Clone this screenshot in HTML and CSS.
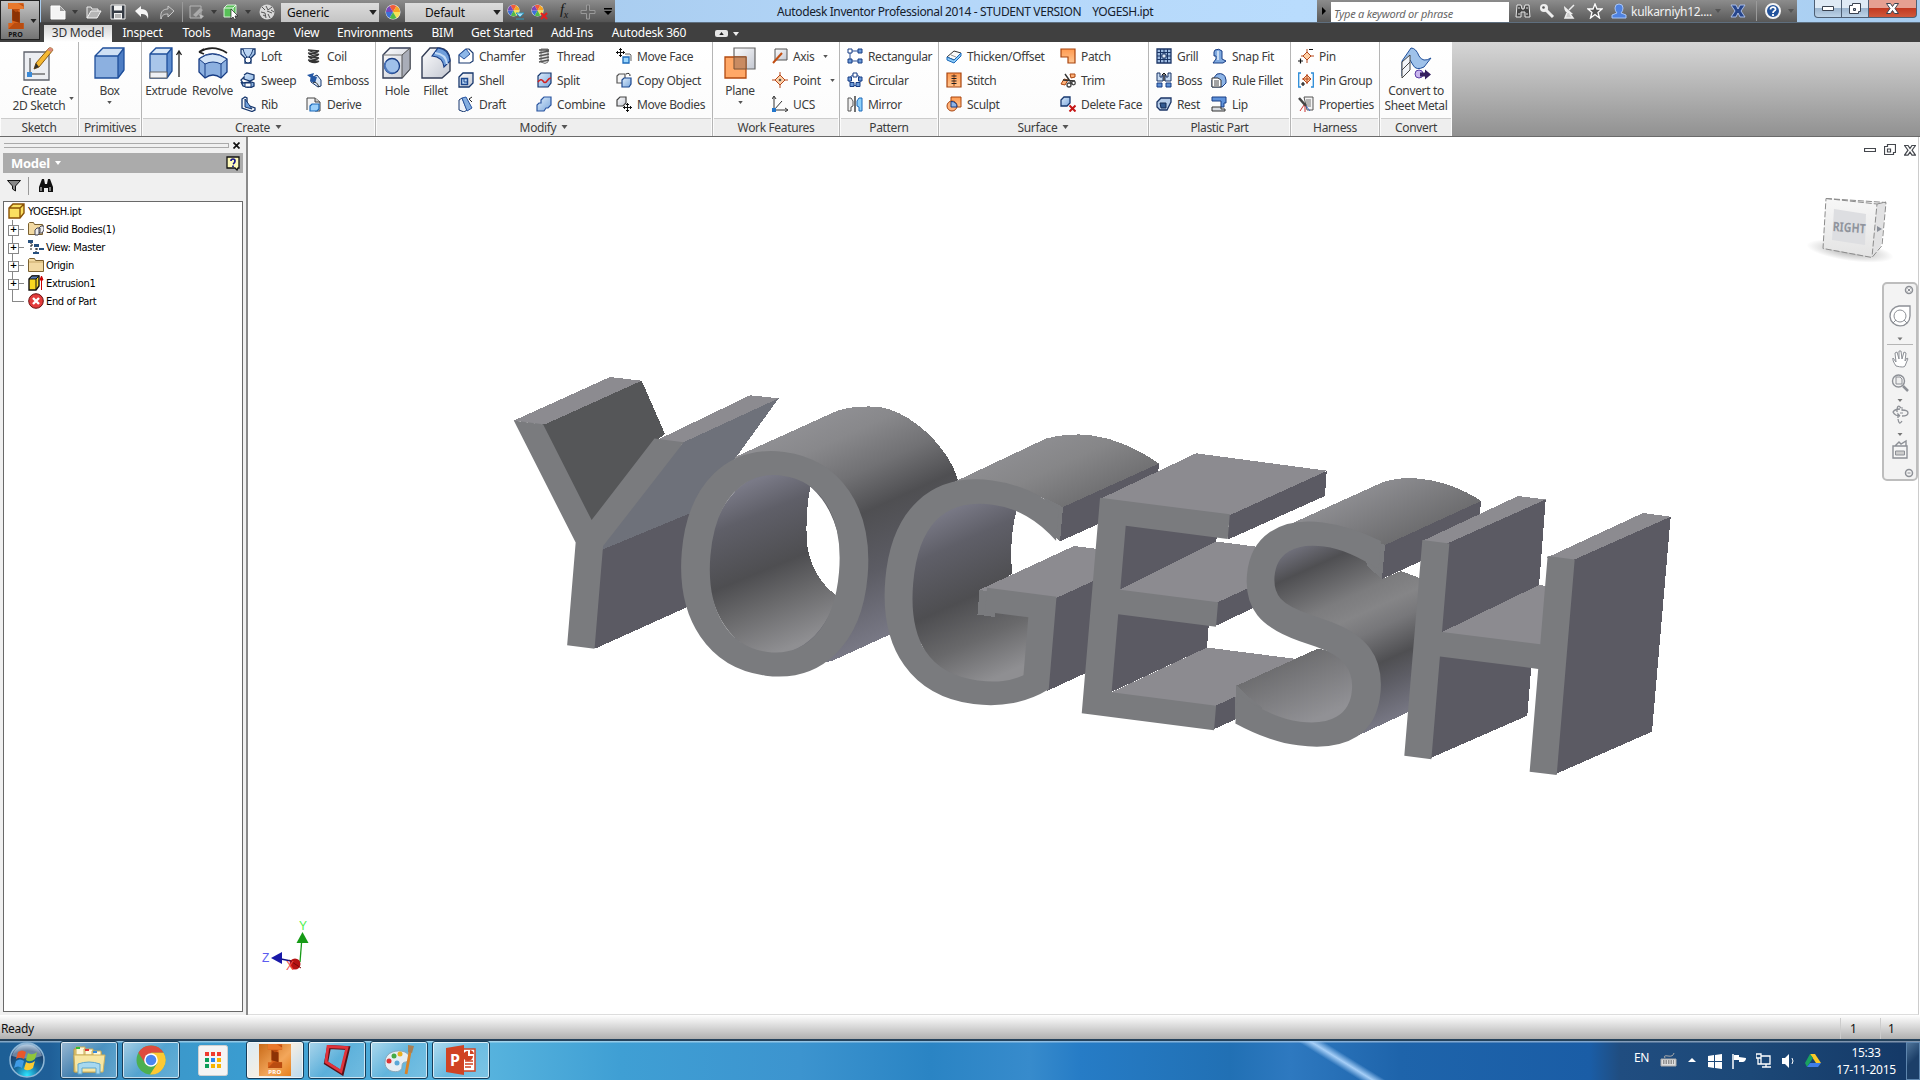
FILE: index.html
```html
<!DOCTYPE html>
<html lang="en">
<head>
<meta charset="utf-8">
<title>Autodesk Inventor Professional 2014</title>
<link rel="stylesheet" href="styles.css">
</head>
<body>
<svg class="defs" width="0" height="0" aria-hidden="true">
  <defs>
    <linearGradient id="blu" x1="0" y1="0" x2="1" y2="1"><stop offset="0" stop-color="#dcecfb"/><stop offset="1" stop-color="#7ba7dc"/></linearGradient>
    <linearGradient id="gry" x1="0" y1="0" x2="1" y2="1"><stop offset="0" stop-color="#fdfdfe"/><stop offset="1" stop-color="#c3c7d1"/></linearGradient>
    <linearGradient id="org" x1="0" y1="0" x2="0" y2="1"><stop offset="0" stop-color="#ff9a50"/><stop offset="1" stop-color="#ffc692"/></linearGradient>
  </defs>
  <symbol id="arrow" viewBox="0 0 6 4"><path d="M0 0h6L3 4z" fill="currentColor"/></symbol>
  <symbol id="inventor" viewBox="0 0 20 34"><path d="M0 0h20v8h-5v18h5v8H0v-8h5V8H0z" fill="#d9621a"/><path d="M5 8l10 4v14l-10-3z" fill="#8c3205"/><path d="M0 0l20 2v6h-5l-5 4-5-4H0zM0 34l8-8h12v8z" fill="#b94c10"/><path d="M0 0h12l8 5v3H0z" fill="#e8782c"/></symbol>

  <symbol id="q-new" viewBox="0 0 16 16"><path d="M1 2h9l5 5v8H1z" fill="#f4f4f4" stroke="#fff"/><path d="M10 2v5h5z" fill="#999"/></symbol>
  <symbol id="q-open" viewBox="0 0 16 16"><path d="M1 14V3h4l1 2h6v3" fill="#888" stroke="#eee"/><path d="M1 14l4-7h10l-4 7z" fill="#b5b5b5" stroke="#f4f4f4"/></symbol>
  <symbol id="q-save" viewBox="0 0 16 16"><path d="M1 1h14v14H1z" fill="#353b44" stroke="#eee"/><path d="M4 1.500h8v5H4zM4 9h8v6H4z" fill="#f3f3f3"/><path d="M5 11h6M5 13h6" stroke="#777"/></symbol>
  <symbol id="q-undo" viewBox="0 0 16 16"><path d="M1 7l6-5v3c6 0 8 4 7 10-1-4-3-5-7-5v3z" fill="#f6f6f6"/></symbol>
  <symbol id="q-redo" viewBox="0 0 16 16"><path d="M15 7L9 2v3C3 5 1 9 2 15c1-4 3-5 7-5v3z" fill="#777" stroke="#c8c8c8"/></symbol>
  <symbol id="q-sketch" viewBox="0 0 16 16"><path d="M1 2h11v12H1z" fill="#777" stroke="#b5b5b5"/><path d="M4 11l7-7 3 2-7 7z" fill="#aaa"/><path d="M10 10l5 2-3 3z" fill="#bbb"/></symbol>
  <symbol id="q-select" viewBox="0 0 16 16"><path d="M1 4l3-3h9v9l-3 3H1z" fill="#58c058" stroke="#d8f0d8"/><path d="M1 4h9v9M10 4l3-3" fill="none" stroke="#e8f8e8"/><path d="M8 5v10l2-2 2 3 1-1-1-3h3z" fill="#fff" stroke="#222" stroke-width=".7"/></symbol>
  <symbol id="q-ball" viewBox="0 0 16 16"><circle cx="8" cy="8" r="7.500" fill="#d8d8d8"/><path d="M3 3l3 3M7 2l2 4 4-3M2 8l4 1 1 5M8 7l5 2M9 10l2 4M12 6l3 2M4 11l2 1" stroke="#555" fill="none"/></symbol>
  <symbol id="q-wheel" viewBox="0 0 16 16"><circle cx="8" cy="8" r="7.500" fill="#eee"/><path d="M8 8L4.500 1.900A7 7 0 0 1 11.500 1.900z" fill="#ef5c3c"/><path d="M8 8l3.500-6.100A7 7 0 0 1 15 8z" fill="#f5a623"/><path d="M8 8h7a7 7 0 0 1-3.500 6.100z" fill="#f6e356"/><path d="M8 8l3.500 6.100a7 7 0 0 1-7 0z" fill="#52b947"/><path d="M8 8l-3.500 6.100A7 7 0 0 1 1 8z" fill="#3c6fd8"/><path d="M8 8H1a7 7 0 0 1 3.500-6.100z" fill="#7a46b8"/></symbol>
  <symbol id="q-wheel-pen" viewBox="0 0 18 16"><use href="#q-wheel" width="13" height="13"/><path d="M9 9h8l-4 4zM9 15h8" fill="#a9dcf8" stroke="#39b"/></symbol>
  <symbol id="q-wheel-x" viewBox="0 0 18 16"><use href="#q-wheel" width="13" height="13"/><path d="M10 9l6 6M16 9l-6 6" stroke="#e02020" stroke-width="2.200"/></symbol>
  <symbol id="q-plus" viewBox="0 0 16 16"><path d="M6.500 1h3v5.500H15v3H9.500V15h-3V9.500H1v-3h5.500z" fill="#666" stroke="#999"/></symbol>
  <symbol id="t-bino" viewBox="0 0 16 16"><path d="M2 2h4l1 4h2l1-4h4l1 12h-5V9H6v5H1z" fill="#444" stroke="#e8e8e8"/><path d="M3 5h2M11 5h2M3 11h2M11 11h2" stroke="#ddd"/></symbol>
  <symbol id="t-key" viewBox="0 0 16 16"><circle cx="5" cy="5" r="4" fill="#eee"/><circle cx="4.500" cy="4.500" r="1.300" fill="#555"/><path d="M7 7l7 7" stroke="#eee" stroke-width="3"/></symbol>
  <symbol id="t-dish" viewBox="0 0 16 16"><path d="M2 3c0 6 4 9 9 8z" fill="#eee"/><path d="M7 7l5-5M5 10l-2 5h8l-3-4" stroke="#eee" stroke-width="1.500" fill="#ccc"/></symbol>
  <symbol id="t-star" viewBox="0 0 16 16"><path d="M8 1l2 5h5l-4 3.500L12.500 15 8 11.500 3.500 15 5 9.500 1 6h5z" fill="#555" stroke="#fff" stroke-width="1.300"/></symbol>
  <symbol id="t-user" viewBox="0 0 16 16"><path d="M8 1q4 0 4 4 0 3-2 5l5 2v3H1v-3l5-2Q4 8 4 5q0-4 4-4z" fill="#4f82e0" stroke="#a8c6f8"/></symbol>
  <symbol id="t-x" viewBox="0 0 16 16"><path d="M1 2h5l2 4 2-4h5l-4 6 4 6h-5l-2-4-2 4H1l4-6z" fill="#27468c" stroke="#a9bce6"/></symbol>
  <symbol id="t-help" viewBox="0 0 16 16"><circle cx="8" cy="8" r="7" fill="#23539c" stroke="#f5f5f5" stroke-width="2"/><path d="M5.500 6.500C5.500 3 11 3.500 10.500 6.500 10 8 8 8 8 10M8 11v2" stroke="#fff" stroke-width="1.800" fill="none"/></symbol>

  <symbol id="i-loft" viewBox="0 0 16 16"><path d="M1 1h14v5l-4 4v5H5v-5L1 6z" fill="url(#blu)" stroke="#16376e" stroke-width="1.300"/><path d="M3 1c1 4 2 6 5 9 3-3 4-5 5-9" fill="#b9d4f3" stroke="#16376e"/><circle cx="8" cy="12" r="3" fill="#fff" stroke="#16376e"/></symbol>
  <symbol id="i-sweep" viewBox="0 0 16 16"><path d="M4 3l3-2 7 2v4l-4 2-6-2v-2L1 8l2 3 8-1 3 1v3l-4 2-7-2-2-4" fill="url(#blu)" stroke="#16376e" stroke-width="1.300"/><path d="M5 11h6v4H5z" fill="#fff" stroke="#16376e"/></symbol>
  <symbol id="i-rib" viewBox="0 0 16 16"><path d="M2 3l3-2 2 1v7l8 3v2l-3 1.500L2 12z" fill="#f4f6fa" stroke="#16376e" stroke-width="1.300"/><path d="M5 3v8l7 2z" fill="#6fa0dc" stroke="#16376e"/></symbol>
  <symbol id="i-coil" viewBox="0 0 16 16"><path d="M2 2l11 1M2 5l11 1.500M2 8.500L13 10M2 12l11 1.500M3 2.500q7 4 10 0M3 6q7 4 10 0M3 9.500q7 4 10 0M3 13q7 3 10 0" stroke="#333" stroke-width="1.400" fill="none"/></symbol>
  <symbol id="i-emboss" viewBox="0 0 16 16"><path d="M5 6l6-3 4 5v6l-3 1-7-5z" fill="#d8e6f6" stroke="#16376e"/><path d="M1 3l7-2-1 3 4 1-2 6-5-2 1-3z" fill="#2458a5"/><path d="M7 11q3-3 6 4" stroke="#333" fill="none"/></symbol>
  <symbol id="i-derive" viewBox="0 0 16 16"><path d="M1 14V2h8l5 4v9H9" fill="#f4f4f4" stroke="#444"/><path d="M9 2v4h5" fill="#ccc" stroke="#444"/><path d="M4 10l2-2h7v5l-2 2H4z" fill="#9bd0fa" stroke="#1b69b9" stroke-width="1.200"/></symbol>
  <symbol id="i-chamfer" viewBox="0 0 16 16"><path d="M1 7l7-6h3l4 4v8l-3 2H1z" fill="#fff" stroke="#16376e" stroke-width="1.200"/><path d="M1 7l7-6 4 5-6 5z" fill="#8db7e8" stroke="#2a55a0"/></symbol>
  <symbol id="i-shell" viewBox="0 0 16 16"><path d="M1 5l4-4h10v10l-4 4H1z" fill="url(#gry)" stroke="#16376e" stroke-width="1.300"/><path d="M3.500 6.500h6v6h-6z" fill="#bcd8f6" stroke="#1b478e" stroke-width="1.500"/><path d="M6 6.500v3.500h4" stroke="#1b478e" fill="none"/></symbol>
  <symbol id="i-draft" viewBox="0 0 16 16"><path d="M1 14V4l3-2 5 12-3 2z" fill="#eef3f9" stroke="#16376e"/><path d="M4 2l4-1 6 11-5 3z" fill="#83aee0" stroke="#2a55a0"/><path d="M14 1l-3 2 3 3" stroke="#222" fill="none"/></symbol>
  <symbol id="i-thread" viewBox="0 0 16 16"><path d="M5 1h7v13l-3 1.500L5 14z" fill="#e5e5e5" stroke="#777"/><path d="M3 5l10-2M3 8l10-2M3 11l10-2M3 14l10-2M3 2h10" stroke="#555" stroke-width="1.300"/></symbol>
  <symbol id="i-split" viewBox="0 0 16 16"><path d="M2 4l3-3h10v10l-3 4H2z" fill="url(#blu)" stroke="#16376e" stroke-width="1.200"/><path d="M2 10q3-4 5-1t4 0 4-3" stroke="#d21f1f" stroke-width="1.500" fill="none"/></symbol>
  <symbol id="i-combine" viewBox="0 0 16 16"><path d="M5 4l3-3h7v8l-3 3h-2l-2 3H1V9l2-2h2z" fill="url(#blu)" stroke="#2a55a0" stroke-width="1.200"/></symbol>
  <symbol id="i-moveface" viewBox="0 0 16 16"><path d="M4.500 0v9M0 4.500h9M3 1.500h3M3 7.500h3M1.500 3v3M7.500 3v3" stroke="#111"/><path d="M9 6h5l1 1v6" fill="#eee" stroke="#666"/><path d="M7 9h6v6H7z" fill="#9bd6fc" stroke="#1b69b9" stroke-width="1.300"/></symbol>
  <symbol id="i-copyobj" viewBox="0 0 16 16"><path d="M1 4l2-2h6v7l-2 2H1z" fill="#f5f5f5" stroke="#555" stroke-width="1.200"/><path d="M6 8l2-2h7v6l-2 3H6z" fill="url(#blu)" stroke="#1b478e" stroke-width="1.200"/><path d="M10 2q4-2 4 2" stroke="#222" fill="none"/></symbol>
  <symbol id="i-movebody" viewBox="0 0 16 16"><path d="M1 4l3-3h6v6l-3 3H1z" fill="url(#gry)" stroke="#444" stroke-width="1.200"/><path d="M11.500 7v9M7 11.500h9M10 8.500h3M10 14.500h3M8.500 10v3M14.500 10v3" stroke="#111"/></symbol>
  <symbol id="i-axis" viewBox="0 0 16 16"><path d="M3 1h12v11H3z" fill="url(#gry)" stroke="#555"/><path d="M1 15L10 5" stroke="#c24e12" stroke-width="2"/></symbol>
  <symbol id="i-point" viewBox="0 0 16 16"><path d="M8 0v16M0 8h16" stroke="#b6471a"/><path d="M8 3l5 5-5 5-5-5z" fill="#ffd0a5" stroke="#b6471a"/><circle cx="8" cy="8" r="1.300" fill="#555"/></symbol>
  <symbol id="i-ucs" viewBox="0 0 16 16"><path d="M2 1v13h13M2 14l8-9" stroke="#333" fill="none"/><path d="M0 3l2-3 2 3M13 12l3 2-3 2" fill="none" stroke="#333"/><path d="M0 12h4v4H0z" fill="#2276cc"/></symbol>
  <symbol id="i-rect" viewBox="0 0 16 16"><path d="M3 3h10M3 3v10h10" stroke="#2a4f96" fill="none"/><path d="M1 1h4v4H1z" fill="#fff" stroke="#173c84"/><path d="M11 1h4v4h-4zM11 11h4v4h-4zM1 11h4v4H1z" fill="#6d9bd8" stroke="#173c84"/></symbol>
  <symbol id="i-circ" viewBox="0 0 16 16"><circle cx="8" cy="8" r="5.500" fill="none" stroke="#2a4f96"/><path d="M6 1h4v4H6z" fill="#fff" stroke="#173c84"/><path d="M1 5h3.500v4H1zM11.500 5H15v4h-3.500zM3 10.500h4v4H3zM9 10.500h4v4H9z" fill="#6d9bd8" stroke="#173c84"/></symbol>
  <symbol id="i-mirror" viewBox="0 0 16 16"><path d="M8 0v16" stroke="#111" stroke-width="1.200"/><path d="M1 2h3l2 3v5l-2 1v4H1z" fill="#eee" stroke="#555"/><path d="M15 2h-3l-2 3v5l2 1v4h3z" fill="#8ed0fa" stroke="#1b69b9"/></symbol>
  <symbol id="i-thicken" viewBox="0 0 16 16"><path d="M1 9l7-6 7 2-7 7z" fill="#fafafa" stroke="#333"/><path d="M1 9v3l7 3 7-7V5l-7 7z" fill="#8ccaf8" stroke="#1b69b9"/><path d="M5 7l5 2" stroke="#999"/></symbol>
  <symbol id="i-stitch" viewBox="0 0 16 16"><path d="M1 1h14v14H1z" fill="url(#org)" stroke="#a8440e" stroke-width="1.200"/><path d="M8 2v12" stroke="#a8440e"/><path d="M5.500 4h5M5.500 6.500h5M5.500 9h5M5.500 11.500h5" stroke="#222" stroke-width="1.200"/></symbol>
  <symbol id="i-sculpt" viewBox="0 0 16 16"><path d="M5 1h10v10H5z" fill="url(#org)" stroke="#a8440e"/><circle cx="6" cy="10" r="5" fill="#ffb27a" stroke="#a8440e"/><path d="M5 5.500q6 0 6 5.500H5z" fill="#8fb4e6" stroke="#173c84"/></symbol>
  <symbol id="i-patch" viewBox="0 0 16 16"><path d="M1 1h14v14H8V9H1z" fill="url(#org)" stroke="#a8440e" stroke-width="1.200"/></symbol>
  <symbol id="i-trim" viewBox="0 0 16 16"><path d="M1 12l3-5 4 1-3 5zM10 2h5v3l-4 1z" fill="#ffb27a" stroke="#a8440e"/><path d="M5 2l7 10M3 8l12 1" stroke="#333" stroke-width="1.400"/><circle cx="9" cy="13" r="2" fill="none" stroke="#444" stroke-width="1.300"/><circle cx="13.500" cy="11" r="1.800" fill="none" stroke="#444" stroke-width="1.300"/></symbol>
  <symbol id="i-delface" viewBox="0 0 16 16"><path d="M1 4l3-3h6v6l-3 3H1z" fill="url(#blu)" stroke="#16376e" stroke-width="1.300"/><path d="M9.500 9.500l6 6M15.500 9.500l-6 6" stroke="#c51616" stroke-width="2"/></symbol>
  <symbol id="i-grill" viewBox="0 0 16 16"><path d="M1 1h14v14H1z" fill="#9cb9df" stroke="#1b3566" stroke-width="1.300"/><path d="M4.500 1v14M8 1v14M11.500 1v14M1 4.500h14M1 8h14M1 11.500h14" stroke="#1b3566"/><path d="M6 6h4v4H6z" fill="#dfe9f6" stroke="#1b3566"/></symbol>
  <symbol id="i-boss" viewBox="0 0 16 16"><path d="M1 1h3v4h2V3h1v6H1zM15 1h-3v4h-2V3H9v6h6z" fill="#c8dbf1" stroke="#1b3566"/><path d="M8 9V1M6 3l2-2 2 2" stroke="#111" fill="none"/><path d="M1 11h5v4H1zM10 11h5v4h-5z" fill="#5d8ed2" stroke="#173c84"/></symbol>
  <symbol id="i-rest" viewBox="0 0 16 16"><path d="M1 6l4-4h10v4l-4 8H4L1 11z" fill="#b4cbe8" stroke="#1b3566" stroke-width="1.300"/><path d="M4 7h6v5H5z" fill="#31588f" stroke="#122a55"/></symbol>
  <symbol id="i-snap" viewBox="0 0 16 16"><path d="M4 2q4-2 7 1v8l4 2-3 2H2l3-4V8H3V4z" fill="#7fa9df" stroke="#173c84"/><path d="M7 3v9" stroke="#e5effa" stroke-width="1.500"/></symbol>
  <symbol id="i-rulefillet" viewBox="0 0 16 16"><path d="M1 8l5-6q8-2 9 6v3l-4 4H1z" fill="#8db4e6" stroke="#173c84"/><path d="M1 6h6l3 2v7H1z" fill="#fff" stroke="#333"/><path d="M3 9h5M3 11h5M3 13h5" stroke="#444"/></symbol>
  <symbol id="i-lip" viewBox="0 0 16 16"><path d="M1 1h14v6h-2v4h-3V5H1z" fill="#5f92da" stroke="#173c84"/><path d="M1 11h9v2h4v2H1z" fill="#d8dce2" stroke="#333"/></symbol>
  <symbol id="i-pin" viewBox="0 0 16 16"><path d="M9 1v14M3 8h13" stroke="#b6471a"/><path d="M9 4l4 4-4 4-4-4z" fill="#ffd0a5" stroke="#b6471a"/><path d="M11 1.500h4M0 13h5M2.500 10.500v5" stroke="#111" stroke-width="1.200"/></symbol>
  <symbol id="i-pingroup" viewBox="0 0 16 16"><path d="M3 1H.7v14H3M13 1h2.300v14H13" stroke="#2a8bd8" fill="none" stroke-width="1.300"/><path d="M9 3l4 4-4 4-4-4z" fill="#ffd0a5" stroke="#b6471a"/><path d="M9 2v10M4 7h9" stroke="#b6471a"/><path d="M3 12h4M5 10v4" stroke="#111" stroke-width="1.200"/></symbol>
  <symbol id="i-props" viewBox="0 0 16 16"><path d="M6 1h9v13H9z" fill="#f4f4f4" stroke="#555"/><path d="M8 4h5M8 6h5M8 8h5M9 10h4" stroke="#777"/><path d="M1 2l7 8" stroke="#444" stroke-width="2.500"/><path d="M6 9l-4 6M7 10v6" stroke="#c33"/><path d="M8 10l4 5" stroke="#36c"/></symbol>

  <symbol id="b-sketch" viewBox="0 0 36 38"><path d="M3 7h25v28H3z" fill="#eceef2" stroke="#5e626b" stroke-width="1.300"/><path d="M9 13v16h15" stroke="#333" fill="none"/><path d="M6 27h5v5H6z" fill="#3a8ad8"/><path d="M13 24l2-6L28 3q3-1 4 2L18 22z" fill="#f5b832" stroke="#8a5a10"/><path d="M28 3q3-1 4 2l-2 2-4-2z" fill="#d98a7a"/><path d="M13 24l2-6 3 4z" fill="#333"/></symbol>
  <symbol id="b-box" viewBox="0 0 36 38"><path d="M3 11l9-8h20l-6 8z" fill="#cfe0f4"/><path d="M3 11h23v22H3z" fill="#8cb0e0"/><path d="M26 11l6-8v23l-6 7z" fill="#4d7dc4"/><path d="M3 11l8-8h21v22l-6 8H3zM3 11h23v22M26 11l6-8" fill="none" stroke="#1f4f9a" stroke-width="1.300"/></symbol>
  <symbol id="b-extrude" viewBox="0 0 36 38"><path d="M2 9l6-6h16l-5 6v24H2z" fill="#a9c6ea"/><path d="M2 9l6-6h16l-5 6z" fill="#dbe9f8"/><path d="M19 9l5-6v23l-5 7z" fill="#5d8dd0"/><path d="M2 9l6-6h16v23l-5 7H2zM2 9h17v24M19 9l5-6" fill="none" stroke="#1f4f9a" stroke-width="1.300"/><path d="M2 27h17v6H2z" fill="#eef0f4" stroke="#666"/><path d="M31 32V7M28.500 10L31 6l2.500 4" stroke="#222" fill="none" stroke-width="1.300"/></symbol>
  <symbol id="b-revolve" viewBox="0 0 36 38"><path d="M4 14q13-10 28 0v13l-6 6q-8-6-16 0l-6-6z" fill="#8cb0e0" stroke="#173c84" stroke-width="1.300"/><path d="M4 14q13-10 28 0l-6 5q-8-4-16 0z" fill="#d3e4f7" stroke="#173c84"/><path d="M10 19v14M26 19v14" stroke="#173c84"/><path d="M4 7q14-8 28 1M4 7l5-3M4 7l5 2" stroke="#222" fill="none" stroke-width="1.700"/></symbol>
  <symbol id="b-hole" viewBox="0 0 36 38"><path d="M4 10l7-7h20v21l-8 9H4z" fill="url(#gry)" stroke="#333d55" stroke-width="1.400"/><path d="M23 10l8-7v21l-8 9z" fill="#a9adb8" stroke="#555"/><path d="M4 10h19" stroke="#777"/><circle cx="13" cy="21" r="7.500" fill="#9fc0ea" stroke="#173c84" stroke-width="1.300"/><path d="M8 15a7.500 7.500 0 0 0 9 12A8 8 0 0 1 8 15z" fill="#4c78bf"/></symbol>
  <symbol id="b-fillet" viewBox="0 0 36 38"><path d="M4 12l8-9h10q9 1 10 12v11l-8 7H4z" fill="url(#gry)" stroke="#333d55" stroke-width="1.400"/><path d="M14 11l6-8q11 1 12 13l-6 6q-1-10-12-11z" fill="#6f9edb" stroke="#173c84" stroke-width="1.200"/><path d="M17 8q11 1 12 11" stroke="#c3daf5" stroke-width="2" fill="none"/></symbol>
  <symbol id="b-plane" viewBox="0 0 36 38"><path d="M12 3h21v21H12z" fill="url(#gry)" stroke="#666" stroke-width="1.200"/><path d="M3 12h21v21H3z" fill="#ff9e56" fill-opacity=".9" stroke="#b24a10" stroke-width="1.300"/><path d="M12 12h12v12H12z" fill="#c98b62" stroke="#7c5438"/></symbol>
  <symbol id="b-convert" viewBox="0 0 36 38"><path d="M4 16l9-13q5 0 8 8 4 7 12 2l-7 9q-8 4-11-2l-3-5-8 16z" fill="#9fc2ea" stroke="#1f4f9a"/><path d="M4 17l8-7v15l-8 8z" fill="#f2f4f8" stroke="#444"/><path d="M4 25l8-8" stroke="#444"/><circle cx="21" cy="29" r="4" fill="#c9b5ee" stroke="#5b3ba5"/><path d="M22 27.500h5v-3l6 5-6 5v-3h-5z" fill="#352060"/></symbol>
</svg>

<header class="titlebar">
  <button class="app-button"><svg class="app-logo"><use href="#inventor"/></svg><svg class="app-arrow"><use href="#arrow"/></svg><span class="app-pro">PRO</span></button>
  <div class="qat">
    <svg class="ic"><use href="#q-new"/></svg><svg class="dd"><use href="#arrow"/></svg>
    <svg class="ic"><use href="#q-open"/></svg><svg class="ic"><use href="#q-save"/></svg>
    <svg class="ic"><use href="#q-undo"/></svg><svg class="ic"><use href="#q-redo"/></svg>
    <i class="sep"></i>
    <svg class="ic"><use href="#q-sketch"/></svg><svg class="dd"><use href="#arrow"/></svg>
    <svg class="ic"><use href="#q-select"/></svg><svg class="dd"><use href="#arrow"/></svg>
    <svg class="ic"><use href="#q-ball"/></svg>
    <div class="combo">Generic<svg><use href="#arrow"/></svg></div>
    <svg class="ic"><use href="#q-wheel"/></svg>
    <div class="combo combo-in">Default<svg><use href="#arrow"/></svg></div>
    <svg class="ic wide"><use href="#q-wheel-pen"/></svg><svg class="ic wide"><use href="#q-wheel-x"/></svg>
    <span class="fx">f<sub>x</sub></span>
    <svg class="ic"><use href="#q-plus"/></svg>
    <svg class="more" viewBox="0 0 8 8"><path d="M0 0h8v1.500H0zM0 3h8L4 7z"/></svg>
  </div>
  <div class="caption">Autodesk Inventor Professional 2014 - STUDENT VERSION<span>YOGESH.ipt</span></div>
  <div class="infocenter">
    <svg class="play" viewBox="0 0 4 8"><path d="M0 0l4 4-4 4z"/></svg>
    <div class="search">Type a keyword or phrase</div>
    <svg class="ic"><use href="#t-bino"/></svg><svg class="ic"><use href="#t-key"/></svg><svg class="ic"><use href="#t-dish"/></svg><svg class="ic"><use href="#t-star"/></svg><svg class="ic"><use href="#t-user"/></svg>
    <span class="account">kulkarniyh12....</span><svg class="dd"><use href="#arrow"/></svg>
    <svg class="ic"><use href="#t-x"/></svg><i class="sep"></i><svg class="ic"><use href="#t-help"/></svg><svg class="dd"><use href="#arrow"/></svg>
  </div>
  <div class="winctl">
    <b><svg width="12" height="6"><path d="M.5.5h11v4H.5z"/></svg></b>
    <b><svg width="12" height="12"><path d="M3.500.5h8v8h-2v2h-9v-8h3zM4.500 5.500h2v2h-2z" fill-rule="evenodd"/></svg></b>
    <b class="close"><svg width="13" height="11"><path d="M.5.500h4l2 3 2-3h4l-3.500 5 3.500 5h-4l-2-3-2 3h-4L4 5.500z"/></svg></b>
  </div>
</header>

<nav class="tabs">
  <a class="tab active" style="width:68px">3D Model</a><a class="tab" style="width:61px">Inspect</a><a class="tab" style="width:47px">Tools</a><a class="tab" style="width:65px">Manage</a><a class="tab" style="width:43px">View</a><a class="tab" style="width:94px">Environments</a><a class="tab" style="width:41px">BIM</a><a class="tab" style="width:78px">Get Started</a><a class="tab" style="width:62px">Add-Ins</a><a class="tab" style="width:92px">Autodesk 360</a>
  <span class="pill"><svg><use href="#arrow"/></svg></span><svg class="dd"><use href="#arrow"/></svg>
</nav>

<section class="ribbon">
  <div class="panel" style="width:79px"><div class="tools">
    <a class="big" style="width:78px"><svg><use href="#b-sketch"/></svg><span>Create<br>2D Sketch</span><svg class="dd side"><use href="#arrow"/></svg></a>
  </div><h3>Sketch</h3></div>
  <div class="panel" style="width:63px"><div class="tools">
    <a class="big" style="width:61px"><svg><use href="#b-box"/></svg>Box<svg class="dd"><use href="#arrow"/></svg></a>
  </div><h3>Primitives</h3></div>
  <div class="panel" style="width:234px"><div class="tools">
    <a class="big" style="width:48px"><svg><use href="#b-extrude"/></svg>Extrude</a><a class="big" style="width:45px"><svg><use href="#b-revolve"/></svg>Revolve</a>
    <ul class="pad" style="width:71px"><li><svg><use href="#i-loft"/></svg>Loft</li><li><svg><use href="#i-sweep"/></svg>Sweep</li><li><svg><use href="#i-rib"/></svg>Rib</li></ul>
    <ul style="width:64px"><li><svg><use href="#i-coil"/></svg>Coil</li><li><svg><use href="#i-emboss"/></svg>Emboss</li><li><svg><use href="#i-derive"/></svg>Derive</li></ul>
  </div><h3>Create<svg class="dd"><use href="#arrow"/></svg></h3></div>
  <div class="panel" style="width:337px"><div class="tools">
    <a class="big" style="width:42px"><svg><use href="#b-hole"/></svg>Hole</a><a class="big" style="width:35px"><svg><use href="#b-fillet"/></svg>Fillet</a>
    <ul class="pad" style="width:83px"><li><svg><use href="#i-chamfer"/></svg>Chamfer</li><li><svg><use href="#i-shell"/></svg>Shell</li><li><svg><use href="#i-draft"/></svg>Draft</li></ul>
    <ul style="width:80px"><li><svg><use href="#i-thread"/></svg>Thread</li><li><svg><use href="#i-split"/></svg>Split</li><li><svg><use href="#i-combine"/></svg>Combine</li></ul>
    <ul style="width:94px"><li><svg><use href="#i-moveface"/></svg>Move Face</li><li><svg><use href="#i-copyobj"/></svg>Copy Object</li><li><svg><use href="#i-movebody"/></svg>Move Bodies</li></ul>
  </div><h3>Modify<svg class="dd"><use href="#arrow"/></svg></h3></div>
  <div class="panel" style="width:127px"><div class="tools">
    <a class="big" style="width:54px"><svg><use href="#b-plane"/></svg>Plane<svg class="dd"><use href="#arrow"/></svg></a>
    <ul class="pad" style="width:72px"><li><svg><use href="#i-axis"/></svg>Axis<svg class="dd"><use href="#arrow"/></svg></li><li><svg><use href="#i-point"/></svg>Point<svg class="dd"><use href="#arrow"/></svg></li><li><svg><use href="#i-ucs"/></svg>UCS</li></ul>
  </div><h3>Work Features</h3></div>
  <div class="panel" style="width:99px"><div class="tools"><ul class="first" style="width:91px"><li><svg><use href="#i-rect"/></svg>Rectangular</li><li><svg><use href="#i-circ"/></svg>Circular</li><li><svg><use href="#i-mirror"/></svg>Mirror</li></ul></div><h3>Pattern</h3></div>
  <div class="panel" style="width:210px"><div class="tools"><ul class="first" style="width:114px"><li><svg><use href="#i-thicken"/></svg>Thicken/Offset</li><li><svg><use href="#i-stitch"/></svg>Stitch</li><li><svg><use href="#i-sculpt"/></svg>Sculpt</li></ul>
    <ul style="width:86px"><li><svg><use href="#i-patch"/></svg>Patch</li><li><svg><use href="#i-trim"/></svg>Trim</li><li><svg><use href="#i-delface"/></svg>Delete Face</li></ul></div><h3>Surface<svg class="dd"><use href="#arrow"/></svg></h3></div>
  <div class="panel" style="width:142px"><div class="tools"><ul class="first" style="width:55px"><li><svg><use href="#i-grill"/></svg>Grill</li><li><svg><use href="#i-boss"/></svg>Boss</li><li><svg><use href="#i-rest"/></svg>Rest</li></ul>
    <ul style="width:76px"><li><svg><use href="#i-snap"/></svg>Snap Fit</li><li><svg><use href="#i-rulefillet"/></svg>Rule Fillet</li><li><svg><use href="#i-lip"/></svg>Lip</li></ul></div><h3>Plastic Part</h3></div>
  <div class="panel" style="width:89px"><div class="tools"><ul class="first" style="width:80px"><li><svg><use href="#i-pin"/></svg>Pin</li><li><svg><use href="#i-pingroup"/></svg>Pin Group</li><li><svg><use href="#i-props"/></svg>Properties</li></ul></div><h3>Harness</h3></div>
  <div class="panel last" style="width:72px"><div class="tools"><a class="big" style="width:72px"><svg><use href="#b-convert"/></svg><span>Convert to<br>Sheet Metal</span></a></div><h3>Convert</h3></div>
</section>

<main class="work">
  <aside class="browser">
    <div class="grip"><i></i><svg width="7" height="7"><path d="M.5.500l6 6M6.500.500l-6 6" stroke="#111" stroke-width="1.700"/></svg></div>
    <div class="head">Model<svg class="dd"><use href="#arrow"/></svg><svg class="help" width="14" height="15"><path d="M1 1h12v11h-1l-1 2-2-2H1z" fill="#fffbb8" stroke="#111" stroke-width="1.300"/><path d="M5 5q0-2 2-2t2 2-2 3M7 9.500v1.500" stroke="#15158a" stroke-width="1.700" fill="none"/></svg></div>
    <div class="bar">
      <svg width="14" height="14" viewBox="0 0 14 14"><path d="M.5 1.500h13L8.500 7v5l-3-2V7z" fill="#888" stroke="#111"/></svg><i></i>
      <svg width="16" height="15" viewBox="0 0 16 15"><path d="M4 1h2l1 5h2l1-5h2l3 8v5h-5v-4H6v4H1V9z" fill="#111"/><path d="M3 9v4M12 9v4" stroke="#eee"/></svg>
    </div>
    <ul class="tree">
      <li class="root"><svg width="17" height="16" viewBox="0 0 17 16"><path d="M1 5l4-4h11v9l-4 5H1zM1 5h11v10M12 5l4-4" fill="#fbe060" stroke="#8a5205" stroke-width="1.400"/></svg>YOGESH.ipt</li>
      <li><i class="plus"></i><svg width="16" height="16" viewBox="0 0 16 16"><path d="M.5 2.500l1-1h4l1 2h8v10H.5z" fill="#f2d9a2" stroke="#7a6030"/><path d="M7 9l2-2h3v4l-2 3H7zM11 7l2-2h3v4l-2 3h-3z" fill="#eee" stroke="#445"/></svg>Solid Bodies(1)</li>
      <li><i class="plus"></i><svg width="16" height="16" viewBox="0 0 16 16"><path d="M3 3v9M3 6h4M8 6v8M8 10h3" stroke="#111" stroke-dasharray="2 1" fill="none"/><path d="M0 1h5v3H0zM6 5h5v3H6zM11 9h5v2h-5zM5 13h6v2H5z" fill="#27507e"/></svg>View: Master</li>
      <li><i class="plus"></i><svg width="16" height="16" viewBox="0 0 16 16"><path d="M.5 2.500l1-1h5l1 2h8v11H.5z" fill="#f2d9a2" stroke="#7a6030"/><path d="M1 5h14" stroke="#c7a868"/></svg>Origin</li>
      <li><i class="plus"></i><svg width="16" height="16" viewBox="0 0 16 16"><path d="M1 4l3-3h7v10l-3 4H1z" fill="#f8d820" stroke="#111" stroke-width="1.400"/><path d="M1 4l3-3h7L8 4z" fill="#5b7fb8" stroke="#111"/><path d="M8 4v11" stroke="#111"/><path d="M13.500 15V3M12 5l1.500-4L15 5z" stroke="#c00" fill="#c00"/></svg>Extrusion1</li>
      <li class="end"><i class="plus none"></i><svg width="16" height="16" viewBox="0 0 16 16"><circle cx="8" cy="8" r="7.300" fill="#e23b3b" stroke="#6d1010"/><path d="M5 5l6 6M11 5l-6 6" stroke="#fff" stroke-width="2.400"/></svg>End of Part</li>
    </ul>
  </aside>

  <div class="canvas">
    <svg class="scene" viewBox="248 137 1670 876" width="1670" height="876">
      <defs>
        <linearGradient id="oOut" gradientUnits="userSpaceOnUse" x1="287.700" y1="637.700" x2="411" y2="911"><stop offset=".04" stop-color="#919195"/><stop offset=".15" stop-color="#88888b"/><stop offset=".28" stop-color="#717174"/><stop offset=".41" stop-color="#4f4f52"/><stop offset=".6" stop-color="#5c5c64"/><stop offset=".83" stop-color="#7a7a87"/></linearGradient>
        <linearGradient id="oIn" gradientUnits="userSpaceOnUse" x1="287.700" y1="637.700" x2="411" y2="911"><stop offset=".16" stop-color="#7a7a87"/><stop offset=".27" stop-color="#5f5f68"/><stop offset=".45" stop-color="#4e4e51"/><stop offset=".56" stop-color="#69696b"/><stop offset=".72" stop-color="#8f8f92"/></linearGradient>
        <linearGradient id="gOut" gradientUnits="userSpaceOnUse" x1="328.800" y1="728.800" x2="452.100" y2="1002"><stop offset=".05" stop-color="#919195"/><stop offset=".2" stop-color="#868688"/><stop offset=".34" stop-color="#707072"/></linearGradient>
        <linearGradient id="gIn" gradientUnits="userSpaceOnUse" x1="328.800" y1="728.800" x2="452.100" y2="1002"><stop offset=".18" stop-color="#7a7a87"/><stop offset=".3" stop-color="#5f5f68"/><stop offset=".48" stop-color="#4e4e51"/><stop offset=".62" stop-color="#69696b"/><stop offset=".76" stop-color="#8f8f92"/></linearGradient>
        <linearGradient id="sTop" gradientUnits="userSpaceOnUse" x1="411" y1="911" x2="452.100" y2="1002"><stop offset="0" stop-color="#919195"/><stop offset=".7" stop-color="#6c6c6e"/></linearGradient>
        <linearGradient id="sMid" gradientUnits="userSpaceOnUse" x1="411" y1="911" x2="513.800" y2="1138.800"><stop offset=".1" stop-color="#7a7a87"/><stop offset=".23" stop-color="#4f4f52"/><stop offset=".4" stop-color="#7c7c7e"/><stop offset=".48" stop-color="#858587"/><stop offset=".56" stop-color="#77777a"/><stop offset=".69" stop-color="#4f4f52"/><stop offset=".78" stop-color="#5e5e66"/><stop offset=".93" stop-color="#7a7a87"/></linearGradient>
        <linearGradient id="sLow" gradientUnits="userSpaceOnUse" x1="463" y1="1027" x2="493" y2="1093"><stop offset="0" stop-color="#69696b"/><stop offset="1" stop-color="#919195"/></linearGradient>
        <clipPath id="oHole"><ellipse cx="774.700" cy="563.700" rx="67" ry="91"/></clipPath>
      </defs>
      <g class="solid">
        <path class="top" d="M514 420.500l96-43.500 31.700 3.700L545.700 425zM653 442l97-46.700 28.700 3L683 444z"/>
        <path fill="#555658" d="M542 424.500l3.700-.5 96-43.300L665 434l-8 6-66 87-8-8z"/>
        <path fill="#6e717a" d="M683.300 442.300l95.400-44L698 510l-98 44v-9z"/>
        <path class="side" d="M599 551l99-41-7 95.400-96 43.300-3-4z"/>
        <text class="face" transform="matrix(1.35 .173 -.12 1.444 496.400 636.200)">Y</text>

        <path fill="url(#oOut)" d="M735 457L838 410.400Q858 405 880 407C905 411 932 433 948 458 958 473 963 495 964 520L926 618 832 661 815 664 735 640z"/>
        <ellipse fill="url(#oIn)" cx="774.700" cy="563.700" rx="67" ry="91" transform="rotate(2 774.700 563.700)"/>
        <path fill="#fff" clip-path="url(#oHole)" d="M811 484C806 505 806 530 807 545 811 568 820 583 837 596L850 590V490z"/>
        <text class="face" transform="matrix(1.345 .174 -.121 1.444 657.300 657.400)">O</text>

        <path fill="url(#gOut)" d="M935 491L1046 438.500Q1068 433 1090 435C1115 438 1140 450 1159 463.500L1063 508.500C1040 495 1000 475 935 491z"/>
        <path class="side" d="M1062 507.500l97-44-3 34.500-96 43.300-2-6z"/>
        <path fill="url(#gIn)" d="M940 512L975 499 1017 508C1010 535 1011 555 1012 574L992 586v25l40 4-2 72H945L908 620V560z"/>
        <path class="top" d="M979 590l95-44 94 12-110 46-74-8z"/>
        <path class="side" d="M1054 599l98-45-8 92-97 45z"/>
        <path class="fill" d="M979.500 590l15 2v25l-17-2.500zM1045 498l18 9.300-3 34-12-11z"/>
        <text class="face" transform="matrix(1.31 .17 -.121 1.444 861.200 685.300)">G</text>

        <path class="top" d="M1100 499l96-45.700 131 17.400-96 45zM1117 591l99-49.500 98 12.500-96 50zM1108 694l99-46.500 105 13.500-96 46z"/>
        <path class="side" d="M1229 515.500l97.700-44.500-1.700 25-97 43.500zM1122 524l95 12-1 5.500-99 49.500zM1216 603l98-45-2 22-98 46.700zM1115 610l94 12-2 25.500-99 46zM1214 706.500l98-45.500-3 25-97 44z"/>
        <text class="face" transform="matrix(1.375 .176 -.1226 1.444 1054.100 709.800)">E</text>

        <path fill="url(#sTop)" d="M1275 531L1382 482.500Q1395 478 1410 478C1440 479 1465 490 1481 501L1384 546C1350 530 1310 520 1275 531z"/>
        <path fill="url(#sMid)" d="M1262 555L1300 532 1345 535 1382 560V579L1401 571 1425 580 1430 702 1355 737 1367 690 1360 660 1337 643 1307 632 1280 612 1262 590z"/>
        <path class="side" d="M1384 545.500l97-44.500-3 34-96 44z"/>
        <path fill="url(#sLow)" d="M1237 685.500L1318 648.500 1345 655 1362 690 1340 727 1300 730 1265 715z"/>
        <path class="fill" d="M1236 684.500Q1248 698 1262 707L1258 722 1234.700 719zM1362 536L1385 545 1382 579 1367 566z"/>
        <text class="face" transform="matrix(1.35 .174 -.121 1.444 1215.500 730.500)">S</text>

        <path class="top" d="M1422.300 541l95.700-45 28 3.500-96 45z"/>
        <path class="side" d="M1446 544l99.700-44.500L1539 586l-100 48z"/>
        <path class="top" d="M1438 634L1539 585l97 13-96 49z"/>
        <path class="side" d="M1436 650l95.700 12-4.400 53.700-98.300 43z"/>
        <path class="top" d="M1546 558l97-45 27.700 3.700-97 45z"/>
        <path class="side" d="M1571 561l99.700-44.300-18.700 215-98 43z"/>
        <text class="face" transform="matrix(1.339 .17 -.1206 1.4447 1377.400 752.300)">H</text>
      </g>
      <g class="triad">
        <path d="M302 937l-2 25" stroke="#169a16" stroke-width="1.300"/><path d="M302.500 932l6 11h-12z" fill="#169a16"/>
        <path d="M281 959l15 3" stroke="#111180" stroke-width="1.300"/><path d="M271 958l11-6v12z" fill="#1818a8"/>
        <circle cx="295" cy="964" r="5.500" fill="#b41414"/><path d="M289 960l12 8" stroke="#7a0808"/>
        <text x="299" y="930" fill="#4df04d">Y</text><text x="262" y="962" fill="#5c5cf0">Z</text><text x="286" y="970" fill="#f05050">X</text>
      </g>
    </svg>

    <div class="docctl"><svg width="12" height="5"><path d="M.5.500h11v3H.5z"/></svg><svg width="12" height="12"><path d="M3.500.500h8v8h-2v2h-9v-8h3zM3.500 5h3v3h-3z"/></svg><svg width="12" height="11"><path d="M.5.500h3.500l2 3 2-3h3.500l-3.500 4.700 3.500 5H8l-2-3-2 3H.5l3.500-5z"/></svg></div>

    <svg class="viewcube" width="100" height="80" viewBox="1800 190 100 80">
      <defs><radialGradient id="shade"><stop offset="0" stop-color="#999" stop-opacity=".8"/><stop offset="1" stop-color="#999" stop-opacity="0"/></radialGradient><linearGradient id="cubeF" x1="0" y1="0" x2="0" y2="1"><stop offset="0" stop-color="#f7f7f7"/><stop offset="1" stop-color="#e4e4e4"/></linearGradient></defs>
      <ellipse cx="1850" cy="251" rx="44" ry="10" fill="url(#shade)" transform="rotate(8 1850 251)"/>
      <path d="M1826 198l60 4-5 43-9 12-49-9z" fill="url(#cubeF)"/>
      <path d="M1877 204l9-2-5 43-9 12z" fill="#e2e2e3"/>
      <path d="M1834 209l32 5-1 31-33-5z" fill="#dddee1"/>
      <path d="M1826 198.500l60 4-4 43-10 12-49-9zM1826 198.500l51 5.500-5 53M1877 204l9-2" fill="none" stroke="#8c8c8c" stroke-dasharray="6 2"/>
      <path d="M1877 226l5 3-5 3z" fill="#8a8f99"/>
      <text x="1832.500" y="231" textLength="33" lengthAdjust="spacingAndGlyphs" transform="rotate(4 1832 230)">RIGHT</text>
    </svg>

    <svg class="navbar" width="36" height="200" viewBox="0 0 36 200">
      <rect x="1" y="1" width="34" height="197" rx="4" fill="#f3f3f3" stroke="#bdbdbd" stroke-width="2"/>
      <g fill="none" stroke="#8d9096">
        <circle cx="27" cy="8" r="3.500" stroke-width="1.500"/><path d="M25.500 6.500l3 3M28.500 6.500l-3 3"/>
        <path d="M28 24h-11a10 10 0 1 0 11 10z" fill="#fff" stroke-width="1.300"/><circle cx="18" cy="34" r="6"/><path d="M22 38l3 3M14 38l-3 3"/>
        <path d="M5 62.500h26" stroke="#b5b5b5"/>
        <path d="M14 84q-4-6-3-8l3 4-1-9 2-1 2 7v-8h2l1 8 2-7 2 1-1 8 2-3q2 0 0 3l-2 5q-1 2-9 0z" fill="#fff"/>
        <circle cx="16.500" cy="99" r="6" stroke-width="1.400"/><path d="M14 95h4l2 2v5h-6z" fill="#eee"/><path d="M21 104l5 5" stroke-width="2.500"/>
        <path d="M18 127q-5 0-7 3 2 4 7 4M18 134l-2-2v4M20 128q6 0 6 3t-6 3M20 139q-3 5-4-2M15 130q0-9 4-4" stroke-width="1.300"/><path d="M20 125v4M18 131h3"/>
        <path d="M11 164h14v12H11zM13 164l4-4 2 2 5-3v5" fill="#f6f6f6" stroke-width="1.400"/><path d="M13.500 169h9v4h-9z" fill="#ccc"/>
        <circle cx="27" cy="191" r="3.500" stroke-width="1.500"/><path d="M25.500 191h3"/>
      </g>
      <path d="M15.500 55.500h5l-2.500 3zM15.500 117h5l-2.500 3zM15.500 151h5l-2.500 3z" fill="#777"/>
    </svg>
  </div>
</main>

<footer class="status"><span class="ready">Ready</span><span class="num">1</span><span class="num">1</span></footer>

<div class="taskbar">
  <div class="orb"><svg width="36" height="36" viewBox="0 0 36 36"><defs><radialGradient id="orb" cx=".5" cy=".95" r=".9"><stop offset="0" stop-color="#2ee6ff"/><stop offset=".4" stop-color="#176a9e"/><stop offset=".8" stop-color="#1b3f6b"/><stop offset="1" stop-color="#8fb4d4"/></radialGradient></defs><circle cx="18" cy="18" r="17" fill="url(#orb)" stroke="#8fb7d6" stroke-width="1.500"/><path d="M3 14a15.500 15.500 0 0 1 30 0q-15 5-30 0z" fill="#fff" opacity=".35"/><path d="M9 10q4-3 8 0l-2 7q-4-3-8 0z" fill="#e8582a"/><path d="M19 11q4 3 9-1l-2 7q-5 4-9 1z" fill="#8fc63a"/><path d="M7 19q4-3 8 0l-2 7q-4-3-8 0z" fill="#3f9be6"/><path d="M17 20q4 3 9-1l-2 7q-5 4-9 1z" fill="#fbcb32"/></svg></div>
  <div class="task"><svg width="34" height="32" viewBox="0 0 34 32"><path d="M2 5h8l2 3h17v20H2z" fill="#e8cf7c" stroke="#b8973f"/><path d="M4 3h9v8H4zM12 5h9v6h-9zM20 7h9v6h-9z" fill="#fff8d8" stroke="#c9ab55"/><path d="M4 3h4v2H4z" fill="#3b3"/><path d="M13 5h4v2h-4z" fill="#d33"/><path d="M21 7h4v2h-4z" fill="#38d"/><path d="M2 11h31l-2 17H3z" fill="#f7e6a3" stroke="#cdb05c"/><path d="M6 30V20q11-4 22 0v10h-4v-6H10v6z" fill="#a6d8f0" stroke="#5fa6cc"/></svg></div>
  <div class="task"><svg width="30" height="30" viewBox="0 0 30 30"><circle cx="15" cy="15" r="14.500" fill="#4caf50"/><path d="M2.400 7.700A14.500 14.500 0 0 1 27.600 7.700H15L9 18z" fill="#dd4b3e"/><path d="M27.600 7.700A14.500 14.500 0 0 1 14 29.500L21.500 18 15 7.700z" fill="#fcc934"/><circle cx="15" cy="15" r="6.800" fill="#fff"/><circle cx="15" cy="15" r="5.300" fill="#4a86f0"/></svg></div>
  <div class="task plain"><svg width="30" height="31" viewBox="0 0 30 31"><rect x=".5" y=".5" width="29" height="30" rx="2" fill="#f4f4f4" stroke="#d0d0d0"/><path d="M7 7h4v4H7zM13 7h4v4h-4zM19 7h4v4h-4z" fill="#f03a2e"/><path d="M7 13h4v4H7zM7 19h4v4H7z" fill="#0d9d58"/><path d="M13 13h4v4h-4z" fill="#2a85f0"/><path d="M19 13h4v4h-4zM19 19h4v4h-4zM13 19h4v4h-4z" fill="#f8b400"/></svg></div>
  <div class="task on"><div class="invtile"><svg><use href="#inventor"/></svg><span>PRO</span></div></div>
  <div class="task"><svg width="30" height="32" viewBox="0 0 30 32"><path d="M7 3l19 1-6 25L4 19z" fill="none" stroke="#5a1016" stroke-width="4"/><path d="M6 2.500l19 1-6 24L4 18z" fill="none" stroke="#e0333c" stroke-width="2.800"/></svg></div>
  <div class="task"><svg width="32" height="32" viewBox="0 0 32 32"><path d="M2 18C2 8 14 5 22 8c6 3 5 9 1 10-4 0-4 3-4 5 0 5-8 6-13 3-3-2-4-4-4-8z" fill="#e6eef4" stroke="#8aa7b8"/><circle cx="6" cy="17" r="2.500" fill="#d33"/><circle cx="11" cy="12" r="2.500" fill="#4a4"/><circle cx="17" cy="10" r="2.500" fill="#e8b020"/><circle cx="14" cy="19" r="2.500" fill="#5aa8d8"/><path d="M27 8l-4 22" stroke="#d98328" stroke-width="2.800"/><path d="M25 1l6 1-2 7-4-1z" fill="#a87f55"/></svg></div>
  <div class="task"><svg width="32" height="32" viewBox="0 0 32 32"><path d="M17 5h13v22H17z" fill="#fff" stroke="#d04323" stroke-width="1.500"/><path d="M20 17h8M20 20h8M20 23h6" stroke="#d04323" stroke-width="1.500"/><path d="M23 7v5h5a5 5 0 1 1-5-5zM25 6a5 5 0 0 1 4 4h-4z" fill="#d04323"/><path d="M1 4l18-3v30L1 28z" fill="#d04323"/></svg><b class="p">P</b></div>

  <div class="tray">
    <span class="en">EN</span>
    <svg width="18" height="16" viewBox="0 0 18 16"><path d="M1 6h15v7H1z" fill="#ddd" stroke="#aaa"/><path d="M3 8h11M3 10h11" stroke="#444" stroke-dasharray="1.500 1"/><path d="M5 5q-2-3 3-2t6-3" stroke="#aaa" fill="none"/></svg>
    <svg width="8" height="5" viewBox="0 0 8 5"><path d="M0 4l4-4 4 4z" fill="#fff"/></svg>
    <svg width="16" height="16" viewBox="0 0 16 16"><path d="M1 3l6-1v6H1zM8 2l7-1v7H8zM1 9h6v6l-6-1zM8 9h7v7l-7-1z" fill="#fff"/></svg>
    <svg width="16" height="16" viewBox="0 0 16 16"><path d="M2 1v15" stroke="#fff" stroke-width="1.500"/><path d="M3 2h5v2l7 1q0 3-3 4H8V7H3z" fill="#fff"/></svg>
    <svg width="16" height="16" viewBox="0 0 16 16"><path d="M5 3h9v8H5zM6 14h9M10 11v3M0 1h5v4H0zM2 5v6h3" fill="none" stroke="#fff" stroke-width="1.300"/></svg>
    <svg width="14" height="16" viewBox="0 0 14 16"><path d="M1 5h3l4-4v14l-4-4H1z" fill="#fff"/><path d="M11 5q2 3 0 6" stroke="#fff" fill="none"/></svg>
    <svg width="18" height="16" viewBox="0 0 18 16"><path d="M6 1h5l6 9h-5z" fill="#fbc926"/><path d="M6 1L1 10l2 4 6-9z" fill="#1aa260"/><path d="M3 14l3-4h11l-3 4z" fill="#3f7de8"/></svg>
    <div class="clock">15:33<br>17-11-2015</div>
    <i class="desk"></i>
  </div>
</div>
</body>
</html>
```
FILE: styles.css
```css
* { box-sizing: border-box; }
body { margin: 0; width: 1920px; height: 1080px; overflow: hidden; font: 12px/15px "Noto Sans", "Open Sans", sans-serif; letter-spacing: -.35px; color: #3c3c3c; background: #fff; display: flex; flex-direction: column; }
.defs { position: absolute; }
svg { flex: none; display: block; }
ul { list-style: none; margin: 0; padding: 0; }
button { border: 0; padding: 0; font: inherit; }
.ic { width: 16px; height: 16px; }
.ic.wide { width: 18px; }
.dd { width: 6px; height: 4px; color: #555; }

.titlebar { height: 23px; display: flex; background: linear-gradient(90deg, #a9cdf0 600px, #b4d6f8 900px, #b9dcfd 1300px, #a8cdf0); border-bottom: 1px solid #5e6e7e; position: relative; z-index: 2; }
.app-button { width: 40px; height: 40px; margin-right: 1px; flex: none; display: grid; grid-template-columns: 29px 11px; grid-template-rows: 29px 9px; background: linear-gradient(#c4c4c4, #747474); border: 1px solid #222; align-items: center; justify-items: center; }
.app-logo { width: 18px; height: 26px; }
.app-arrow { width: 7px; height: 4px; margin: 10px 4px 0 0; color: #222; }
.app-pro { font: bold 7px/9px "Noto Sans", sans-serif; color: #111; letter-spacing: 0; }
.qat { width: 574px; height: 23px; flex: none; padding-left: 7px; display: grid; grid-template-columns: 20px 14px 24px 24px 24px 26px 5px 24px 10px 24px 10px 27px 100px 25px 98px 25px 24px 24px 24px 15px; align-items: center; justify-items: center; background: linear-gradient(#8c8c8c, #545454); border-bottom: 1px solid #444; }
.qat .dd { color: #3a3a3a; }
.sep { width: 1px; height: 20px; background: #9a9a9a; }
.combo { width: 98px; height: 19px; background: linear-gradient(#dcdcdc, #c4c4c4); color: #111; display: flex; align-items: center; justify-content: space-between; padding: 0 2px 0 6px; letter-spacing: -.2px; }
.combo svg { width: 8px; height: 5px; color: #222; }
.combo-in { padding-left: 20px; }
.fx { font: italic 15px/18px "Liberation Serif", serif; color: #161616; }
.fx sub { font-size: 10px; }
.more { width: 8px; height: 8px; }
.caption { flex: 1; padding-left: 162px; line-height: 23px; color: #15202c; white-space: pre; letter-spacing: -.38px; }
.caption span { margin-left: 11px; }
.infocenter { width: 480px; flex: none; display: grid; grid-template-columns: 14px 178px 27px 21px 26px 24px 24px 81px 12px 28px 8px 25px 12px; align-items: center; justify-items: center; background: linear-gradient(#8c8c8c, #585858); }
.play { width: 4px; height: 8px; }
.search { width: 178px; height: 20px; background: #fff; color: #666; font-style: italic; font-size: 11px; line-height: 23px; padding-left: 3px; letter-spacing: -.22px; align-self: end; }
.account { color: #f2f2f2; letter-spacing: -.3px; }
.winctl { width: 123px; padding-left: 17px; display: flex; }
.winctl b { width: 28px; height: 18px; border: 1px solid #4e5f74; border-top: 0; background: linear-gradient(#dfeaf5 45%, #9db6cf 50%, #bdd3e8); display: grid; place-items: center; border-radius: 0 0 0 4px; }
.winctl b + b { border-left: 0; border-radius: 0; width: 27px; }
.winctl b.close { width: 48px; background: linear-gradient(#e6a092 45%, #c23a22 50%, #d0583c); border-radius: 0 0 4px; }
.winctl path { fill: #fff; stroke: #3a4250; }

.tabs { height: 19px; padding: 2px 0 0 44px; background: #404040; display: flex; align-items: center; flex: none; }
.tab { height: 17px; line-height: 16px; text-align: center; color: #fff; letter-spacing: -.2px; }
.tab.active { background: linear-gradient(#d4d4d4, #fff); color: #333; }
.pill { width: 13px; height: 7px; margin: 0 5px 0 20px; border-radius: 2px; background: #e6e6e6; display: grid; place-items: center; }
.pill svg { width: 5px; height: 3px; transform: rotate(180deg); color: #222; }
.tabs .dd { color: #eee; }

.ribbon { height: 95px; flex: none; display: flex; background: linear-gradient(#d6d6d6, #919191); border-bottom: 1px solid #6a6a6a; }
.panel { flex: none; height: 94px; background: linear-gradient(#fff, #fbfbfb); border-right: 1px solid #b5b5b5; display: flex; flex-direction: column; }
.panel.last { border-right: 0; }
.tools { height: 76px; display: flex; }
.panel h3 { margin: 0 1px; height: 18px; font: inherit; line-height: 15px; padding-bottom: 1px; background: #eee; border-top: 1px solid #ccc; display: flex; justify-content: center; align-items: center; gap: 5px; }
.panel h3 .dd { width: 7px; height: 4px; }
.big { display: flex; flex-direction: column; align-items: center; text-align: center; padding-top: 3px; line-height: 15px; position: relative; white-space: nowrap; }
.big > svg:first-child { width: 36px; height: 38px; }
.big .dd { margin-top: 3px; width: 5px; height: 3px; }
.big .side { position: absolute; right: 4px; bottom: 18px; }
.tools ul { padding-top: 2px; flex: none; }
.tools .first { margin-left: 7px; }
.tools .pad { padding-left: 5px; }
.tools li { height: 24px; display: flex; align-items: center; gap: 5px; white-space: nowrap; }
.tools li > svg:first-child { width: 16px; height: 16px; }
.tools li .dd { margin-left: 4px; width: 5px; height: 3px; }

.work { height: 878px; flex: none; display: flex; }
.browser { width: 248px; background: #f0f0f0; border-right: 2px solid #8a8a8a; padding: 5px 3px 3px; display: flex; flex-direction: column; font: 11px/13px "DejaVu Sans Condensed", "DejaVu Sans", sans-serif; font-stretch: condensed; letter-spacing: -.35px; color: #000; }
.grip { height: 11px; display: flex; justify-content: space-between; padding: 0 3px 0 1px; }
.grip i { width: 225px; height: 5px; margin-top: 1px; border: 1px solid #aaa; border-left: 0; }
.head { height: 20px; background: #ababab; color: #fff; font: bold 13px/20px "Noto Sans", sans-serif; letter-spacing: -.3px; padding: 0 3px 0 8px; display: flex; align-items: center; gap: 4px; }
.head .dd { width: 8px; height: 4px; color: #fff; }
.head .help { margin-left: auto; }
.bar { height: 28px; display: flex; align-items: center; padding: 0 0 3px 4px; gap: 7px; }
.bar i { width: 1px; height: 18px; background: #999; margin-right: 2px; }
.tree { flex: 1; width: 240px; border: 1px solid #696969; background: #fff; }
.tree { padding-left: 3px; }
.tree li { height: 18px; display: flex; align-items: center; gap: 2px; position: relative; }
.tree .root { gap: 3px; padding-left: 1px; }
.plus { width: 18px; height: 18px; margin-right: 1px; background: linear-gradient(#888, #888) 5px 0/1px 100% no-repeat, linear-gradient(#888, #888) 5px 9px/12px 1px no-repeat; position: relative; }
.plus::after { content: "+"; position: absolute; left: 1px; top: 5px; width: 9px; height: 9px; border: 1px solid #888; background: #fff; font: bold 9px/7px "DejaVu Sans", sans-serif; text-align: center; letter-spacing: 0; }
.plus.none { background-size: 1px 10px, 12px 1px; }
.plus.none::after { display: none; }

.canvas { position: relative; width: 1671px; background: #fff; border-right: 1px solid #ccc; border-bottom: 1px solid #ddd; }
.solid path { shape-rendering: crispEdges; }
.top { fill: #8c8b90; }
.side { fill: #5b5a63; }
.fill { fill: #7a7b7e; }
.face { fill: #7a7b7e; font: 204.800px "DejaVu Sans", sans-serif; letter-spacing: 0; }
.triad text { font: 12px "Liberation Sans", sans-serif; }
.docctl { position: absolute; right: 2px; top: 7px; display: flex; align-items: center; gap: 8px; }
.docctl path { fill: #fff; stroke: #44474d; stroke-width: 1.200; }
.viewcube { position: absolute; left: 1552px; top: 53px; }
.viewcube text { font: bold 13px "Noto Sans", sans-serif; fill: #8f949c; letter-spacing: 0; }
.navbar { position: absolute; left: 1634px; top: 145px; }

.status { height: 24px; flex: none; display: flex; align-items: center; background: linear-gradient(#fff, #b0b0b0); color: #111; padding-top: 2px; }
.ready { flex: 1; padding-left: 1px; }
.num { width: 40px; height: 21px; line-height: 21px; border-left: 1px solid #ccc; padding-left: 9px; }
.num:last-child { padding-left: 7px; }

.taskbar { height: 41px; flex: none; display: flex; border-top: 2px solid #24425c; background:
  linear-gradient(31.8deg, transparent 42%, #a6cff8 50%, transparent 58%) 1292px 0/100px 40px no-repeat,
  linear-gradient(180deg, rgba(255,255,255,.45) 0 1px, transparent 2px),
  linear-gradient(90deg, #1d5f96 0, #1f5f98 50px, #3c96c8 130px, #3a9cd0 240px, #58b4de 480px, #3f9fd4 620px, #3c94cf 800px, #2a84c4 930px, #378bcc 1030px, #267cc6 1080px, #2170b4 1230px, #2e79c0 1290px, #1e64ab 1400px, #1a5da6 1590px, #204d80 1620px, #1c4877 1750px, #153a68 1900px); }
.orb { width: 60px; padding: 1px 0 0 9px; }
.task { position: relative; width: 58px; height: 38px; margin-right: 4px; border: 1px solid #163c58; border-radius: 3px; box-shadow: inset 0 0 0 1px rgba(255,255,255,.65); background: linear-gradient(135deg, rgba(255,255,255,.55), rgba(255,255,255,.12) 50%, rgba(255,255,255,.22)); display: grid; place-items: center; }
.task.plain { background: none; border-color: transparent; box-shadow: none; }
.task.on { background: linear-gradient(135deg, #d9ebf6, #f6efe4 50%, #b9d9ee); }
.invtile { width: 32px; height: 32px; background: linear-gradient(135deg, #c96a18, #f3a75b 60%, #e57f1a); display: flex; flex-direction: column; align-items: center; }
.invtile svg { width: 16px; height: 24px; }
.invtile span { font: bold 6px/8px "Noto Sans", sans-serif; color: #fff; letter-spacing: .3px; }
.p { position: absolute; left: 17px; top: 8px; font: bold 16px/20px "Noto Sans", sans-serif; color: #fff; }
.tray { margin-left: auto; width: 286px; display: grid; grid-template-columns: 22px 25px 22px 24px 24px 25px 24px 26px 80px 14px; align-items: center; color: #fff; }
.tray > svg { justify-self: center; }
.en { margin-top: -6px; }
.clock { text-align: center; line-height: 17px; letter-spacing: -.3px; white-space: nowrap; }
.desk { width: 14px; height: 38px; border: 1px solid #5e86ae; background: linear-gradient(135deg, #4f7499, #1c3f68 50%); }
```
